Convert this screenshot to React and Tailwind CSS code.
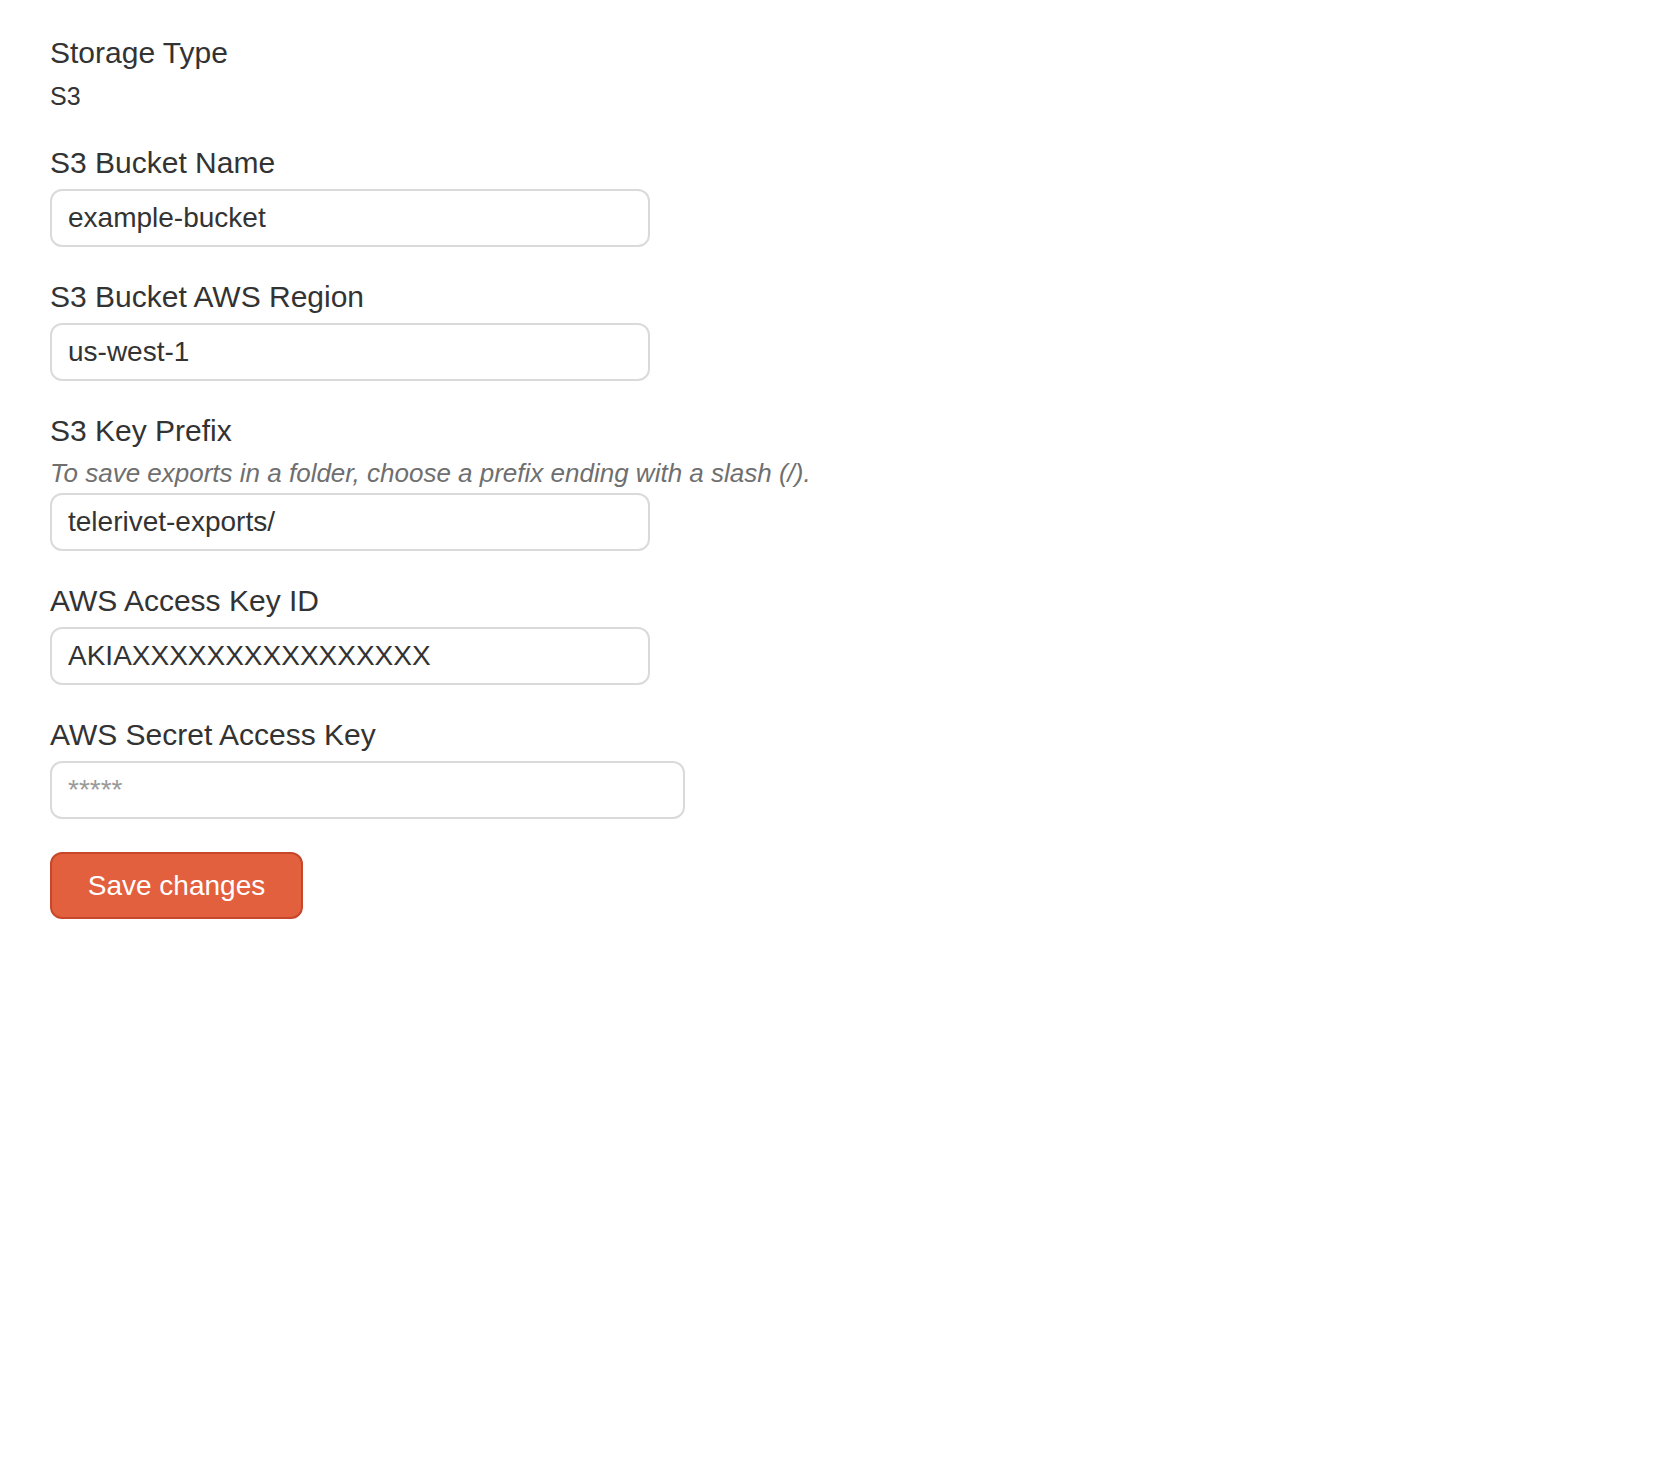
const fields = [
  { label: 'S3 Bucket Name', value: 'example-bucket' },
  { label: 'S3 Bucket AWS Region', value: 'us-west-1' },
  {
    label: 'S3 Key Prefix',
    help: 'To save exports in a folder, choose a prefix ending with a slash (/).',
    value: 'telerivet-exports/',
  },
  { label: 'AWS Access Key ID', value: 'AKIAXXXXXXXXXXXXXXXX' },
];

const inputClass =
  'block h-[58px] rounded-[12px] border-2 border-[#dadada] bg-white px-[16px] text-[28px] text-[#333] outline-none placeholder:text-[#9a9a9a]';

export default function App() {
  return (
    <div className="min-h-screen bg-white px-[50px] pt-[33px] font-['Liberation_Sans',Arial,sans-serif] text-[#333]">
      <div className="mb-[30px]">
        <div className="mb-[6px] text-[30px] leading-[40px]">Storage Type</div>
        <div className="text-[25px] leading-[34px]">S3</div>
      </div>

      {fields.map((f) => (
        <div key={f.label} className="mb-[30px]">
          <div className="mb-[6px] text-[30px] leading-[40px]">{f.label}</div>
          {f.help && (
            <div className="-mt-[1px] mb-[3px] text-[26px] italic leading-[34px] text-[#6f6f6f]">
              {f.help}
            </div>
          )}
          <input className={`${inputClass} w-[600px]`} defaultValue={f.value} />
        </div>
      ))}

      <div className="mb-[33px]">
        <div className="mb-[6px] text-[30px] leading-[40px]">AWS Secret Access Key</div>
        <input className={`${inputClass} w-[635px]`} placeholder="*****" />
      </div>

      <button className="h-[67px] w-[253px] rounded-[12px] border-2 border-[#c7472b] bg-[#e3603f] text-[28px] text-white">
        Save changes
      </button>
    </div>
  );
}
